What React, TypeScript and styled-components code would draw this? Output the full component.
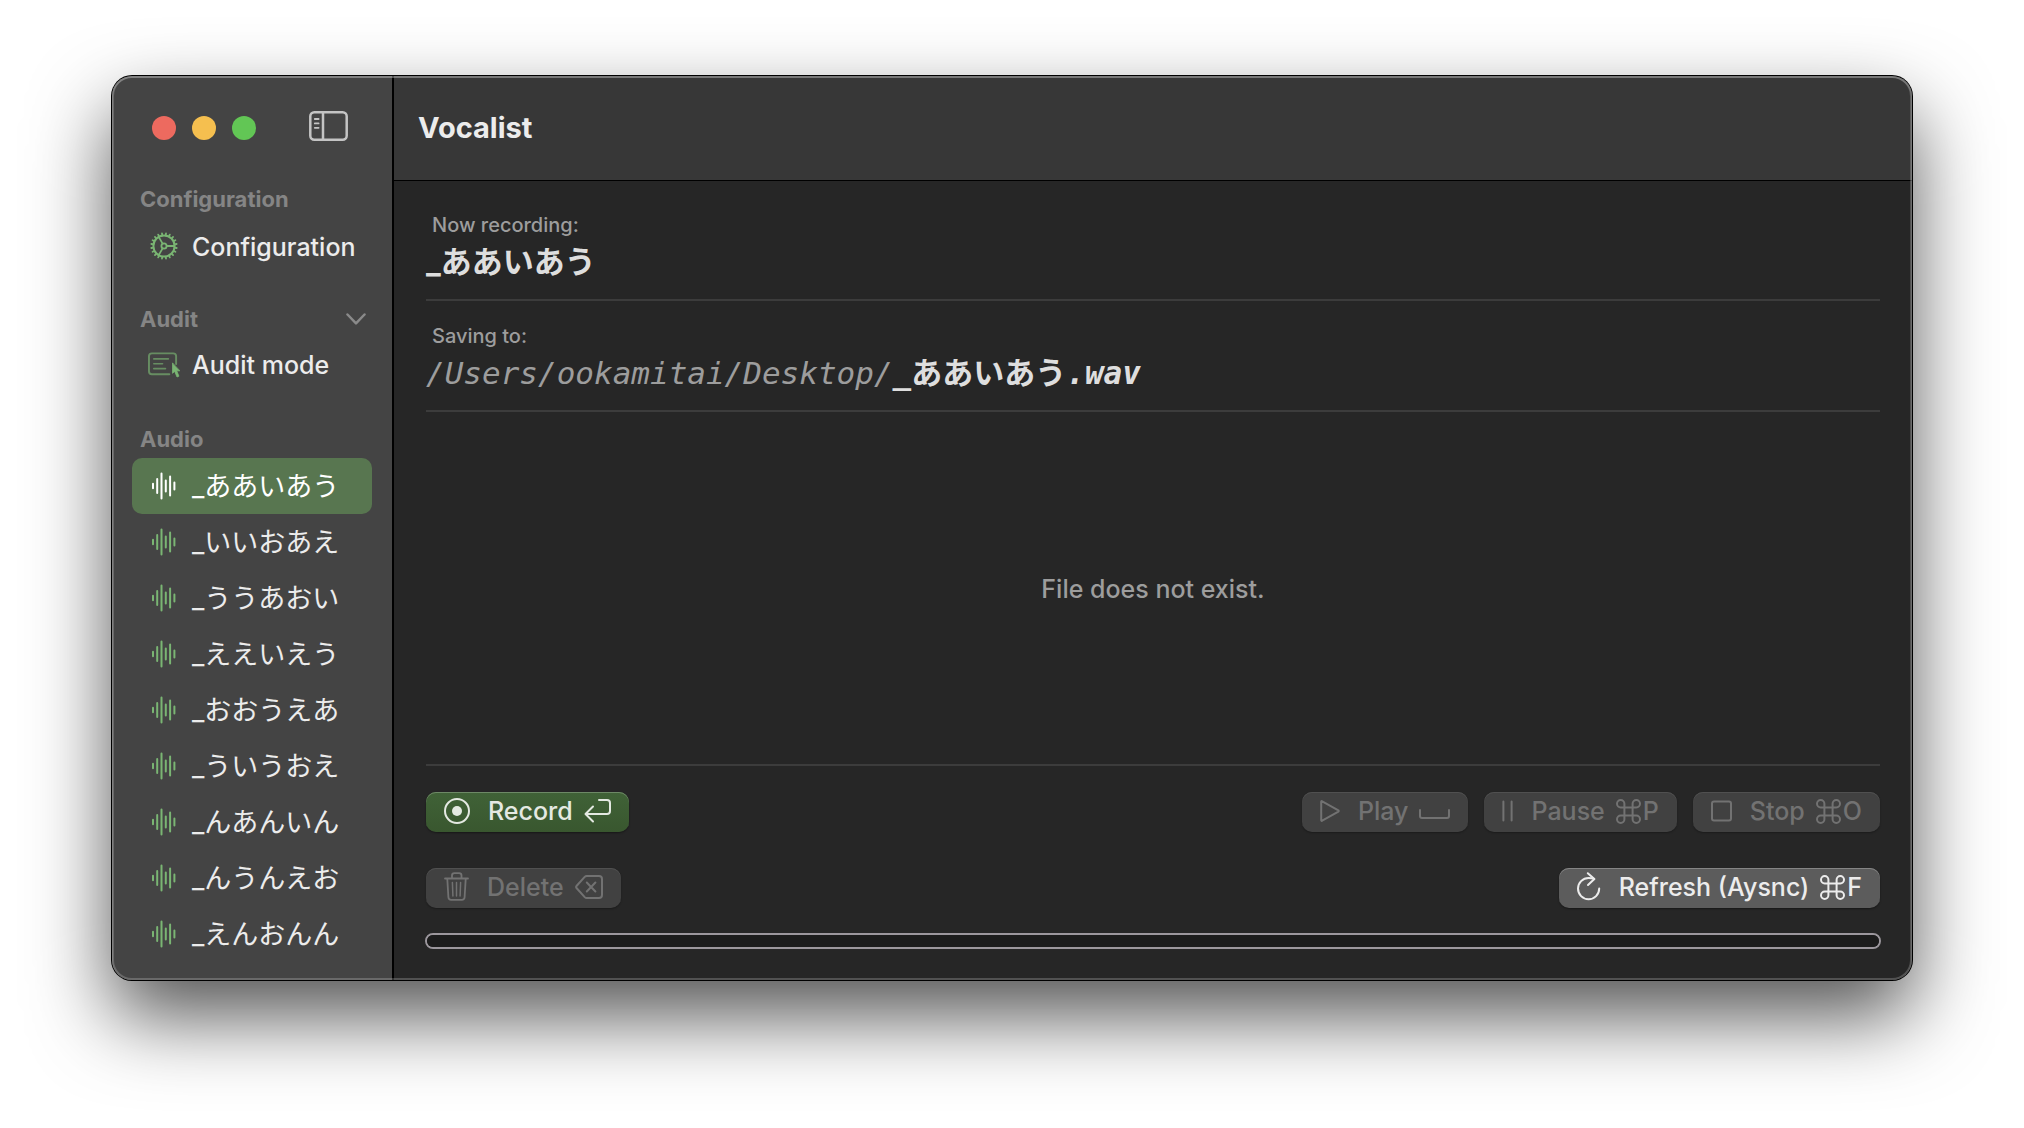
import React, { useState } from "react";
import styled, { createGlobalStyle, css } from "styled-components";

const sans = `Inter, "Noto Sans CJK JP", sans-serif`;
const mono = `"DejaVu Sans Mono", "Noto Sans CJK JP", monospace`;

const GlobalStyle = createGlobalStyle`
  *, *::before, *::after { box-sizing: border-box; }
  body {
    margin: 0;
    background: #ffffff;
    font-family: ${sans};
    -webkit-font-smoothing: antialiased;
  }
  button { font: inherit; border: 0; margin: 0; padding: 0; background: none; color: inherit; }
`;

const Desktop = styled.div`
  display: flex;
  min-height: 100vh;
  padding: 76px 112px 148px;
  overflow: hidden;
`;

const Window = styled.div`
  position: relative;
  display: flex;
  flex: 1;
  min-width: 0;
  border-radius: 20px;
  background: #262626;
  box-shadow: 0 0 0 1px #000000, 0 36px 80px rgba(0, 0, 0, 0.68);

  &::after {
    content: "";
    position: absolute;
    inset: 0;
    border-radius: 20px;
    box-shadow: inset 0 0 0 2px rgba(255, 255, 255, 0.2), inset 0 1px 0 1px rgba(255, 255, 255, 0.16);
    pointer-events: none;
  }
`;

const Sidebar = styled.aside`
  display: flex;
  flex-direction: column;
  flex: none;
  width: 282px;
  border-right: 2px solid #000000;
  border-radius: 20px 0 0 20px;
  background: #444444;
`;

const SidebarBar = styled.div`
  display: flex;
  align-items: center;
  justify-content: space-between;
  height: 104px;
  padding: 0 44px 0 40px;
`;

const Lights = styled.div`
  display: flex;
  gap: 16px;
`;

const Light = styled.button<{ $color: string }>`
  width: 24px;
  height: 24px;
  border-radius: 50%;
  background: ${(p) => p.$color};
`;

const IconButton = styled.button`
  display: flex;
  padding-bottom: 4px;
  color: #c4c4c4;
`;

const Nav = styled.nav`
  display: flex;
  flex-direction: column;
  gap: 26px;
  padding: 0 20px;
`;

const SectionHead = styled.div`
  display: flex;
  align-items: center;
  justify-content: space-between;
  height: 38px;
  padding: 0 6px 0 8px;
  color: #858585;
`;

const SectionTitle = styled.h2`
  margin: 0;
  font-size: 22px;
  line-height: 26px;
  font-weight: 700;
`;

const Disclosure = styled.button`
  display: flex;
  color: #8a8a8a;
`;

const Row = styled.button<{ $selected?: boolean; $compact?: boolean }>`
  display: flex;
  align-items: center;
  gap: 12px;
  width: 100%;
  height: ${(p) => (p.$compact ? "54px" : "56px")};
  margin-bottom: ${(p) => (p.$compact ? "2px" : "0")};
  padding: 0 16px;
  border-radius: 10px;
  font-size: 25px;
  line-height: 32px;
  font-weight: 500;
  text-align: left;
  white-space: nowrap;
  color: ${(p) => (p.$selected ? "#ffffff" : "#ececec")};
  background: ${(p) => (p.$selected ? "#587650" : "transparent")};
`;

const KanaRow = styled(Row)`
  font-size: 27px;
  font-weight: 400;
`;

const RowLabel = styled.span`
  padding-top: 2px;
`;

const IconSlot = styled.span<{ $selected?: boolean }>`
  display: flex;
  justify-content: center;
  flex: none;
  width: 32px;
  color: ${(p) => (p.$selected ? "#ffffff" : "#7ab573")};
`;

const Main = styled.main`
  display: flex;
  flex-direction: column;
  flex: 1;
  min-width: 0;
`;

const TitleBar = styled.header`
  display: flex;
  align-items: center;
  height: 105px;
  padding-left: 24px;
  border-bottom: 1px solid #000000;
  border-radius: 0 20px 0 0;
  background: #373737;
`;

const Title = styled.h1`
  margin: 0;
  font-size: 29px;
  line-height: 36px;
  font-weight: 700;
  color: #ececec;
`;

const Content = styled.div`
  display: flex;
  flex-direction: column;
  flex: 1;
  padding: 9px 32px 31px;
`;

const Field = styled.section`
  display: flex;
  flex-direction: column;
  gap: 5px;
  padding: 23px 0 17px;
  border-bottom: 2px solid #3c3c3c;
`;

const FieldLabel = styled.div`
  padding-left: 6px;
  font-size: 20px;
  line-height: 24px;
  font-weight: 500;
  color: #9d9d9d;
`;

const FieldValue = styled.div`
  font-size: 31px;
  line-height: 40px;
  font-weight: 700;
  color: #dedede;
`;

const PathValue = styled(FieldValue)`
  font-family: ${mono};
  font-weight: 400;
  font-style: italic;
  white-space: nowrap;
  color: #9d9d9d;
`;

const FileName = styled.strong`
  font-weight: 700;
  color: #dedede;
`;

const Upright = styled.span`
  font-style: normal;
`;

const Empty = styled.div`
  display: flex;
  align-items: center;
  justify-content: center;
  flex: 1;
  padding-top: 2px;
  border-bottom: 2px solid #3c3c3c;
  font-size: 25px;
  line-height: 32px;
  font-weight: 500;
  color: #9d9d9d;
`;

const Controls = styled.div`
  display: flex;
  flex-direction: column;
  gap: 36px;
  padding: 26px 0 25px;
`;

const ControlRow = styled.div`
  display: flex;
  justify-content: space-between;
`;

const Group = styled.div`
  display: flex;
  gap: 16px;
`;

const tones = {
  primary: css`
    color: #e4e9e2;
    background: linear-gradient(#406237, #39572f);
    box-shadow: inset 0 1px 0 #6d8966, 0 1px 2px rgba(0, 0, 0, 0.4);
  `,
  normal: css`
    color: #ececec;
    background: #5c5c5c;
    box-shadow: inset 0 1px 0 #858585, 0 1px 2px rgba(0, 0, 0, 0.4);
  `,
  disabled: css`
    color: #727272;
    background: #414141;
    box-shadow: inset 0 1px 0 #505050, 0 1px 2px rgba(0, 0, 0, 0.3);
  `,
};

const Push = styled.button<{ $tone: keyof typeof tones }>`
  display: flex;
  align-items: center;
  height: 40px;
  padding: 0 18px 2px;
  gap: 18px;
  border-radius: 10px;
  font-size: 25px;
  line-height: 32px;
  font-weight: 500;
  white-space: nowrap;
  ${(p) => tones[p.$tone]}
`;

const PushText = styled.span`
  display: flex;
  align-items: center;
  gap: 11px;
`;

const Keys = styled.span`
  display: flex;
  align-items: center;
  gap: 2px;
`;

const Meter = styled.progress`
  display: block;
  appearance: none;
  width: auto;
  height: 16px;
  margin: 0 -1px;
  border: 2px solid #9c979d;
  border-radius: 8px;
  background: #1c1c1c;
  overflow: hidden;

  &::-webkit-progress-bar { background: #1c1c1c; }
  &::-webkit-progress-value { background: #587650; }
`;

type IconProps = { w: number; h: number; s?: number; children: React.ReactNode };

const Icon = ({ w, h, s = 2, children }: IconProps) => (
  <svg
    width={w}
    height={h}
    viewBox={`0 0 ${w} ${h}`}
    fill="none"
    stroke="currentColor"
    strokeWidth={s}
    strokeLinecap="round"
    strokeLinejoin="round"
    aria-hidden="true"
  >
    {children}
  </svg>
);

const SidebarIcon = () => (
  <Icon w={39} h={30} s={2.5}>
    <rect x="1.3" y="1.3" width="36.4" height="27.4" rx="4" />
    <path d="M14 1.5v27" />
    <path d="M5.8 8h3.8M5.8 12.4h3.8M5.8 16.8h3.8" strokeWidth="1.8" />
  </Icon>
);

const GearIcon = () => {
  const teeth = Array.from({ length: 20 }, (_, i) => i * 18);
  return (
    <Icon w={28} h={28}>
      <circle cx="14" cy="14" r="10.6" />
      <circle cx="14" cy="14" r="2.6" strokeWidth="1.8" />
      <path d="M16.8 14h7.6M12.6 11.6L8.7 4.9M12.6 16.4l-3.9 6.7" strokeWidth="1.8" />
      {teeth.map((a) => (
        <path key={a} d="M14 2.4V1.2" strokeWidth="1.8" transform={`rotate(${a + 9} 14 14)`} />
      ))}
    </Icon>
  );
};

const AuditIcon = () => (
  <Icon w={33} h={26}>
    <g opacity="0.65">
      <path d="M22 22.5H4a3 3 0 0 1-3-3V4a3 3 0 0 1 3-3h22a3 3 0 0 1 3 3v8" />
      <path d="M6 6.7h15M6 11.7h9M6 16.8h12" strokeWidth="1.7" />
    </g>
    <path
      d="M25.3 11.2v10.4l2.2-2 2.4 5.8 2-0.9-2.3-5.5h2.9z"
      fill="currentColor"
      strokeWidth="0.8"
    />
  </Icon>
);

const WaveIcon = () => (
  <Icon w={24} h={28}>
    <path d="M1 11.8v4.4M5.2 7v14M9.5 1.5v25M13.8 8.5v11M18.1 4.5v19M22.4 10.5v7" />
  </Icon>
);

const ChevronIcon = () => (
  <Icon w={20} h={12} s={2.5}>
    <path d="M1.5 1.5L10 10.3l8.5-8.8" />
  </Icon>
);

const RecordIcon = () => (
  <Icon w={26} h={26}>
    <circle cx="13" cy="13" r="12" />
    <circle cx="13" cy="13" r="5" fill="currentColor" stroke="none" />
  </Icon>
);

const ReturnIcon = () => (
  <Icon w={27} h={27}>
    <path d="M15 2h8a3 3 0 0 1 3 3v8a3 3 0 0 1-3 3H1.6M9 8.5L1.5 16L9 23.5" />
  </Icon>
);

const TrashIcon = () => (
  <Icon w={25} h={32} s={1.8}>
    <path d="M1 7.5h23M8 7V4.5a2.4 2.4 0 0 1 2.4-2.4h4.7a2.4 2.4 0 0 1 2.4 2.4V7" />
    <path d="M3.3 8l1.1 18.2a2.8 2.8 0 0 0 2.8 2.6h10.6a2.8 2.8 0 0 0 2.8-2.6L21.7 8" />
    <path d="M8.4 11.5l.5 13.5M12.5 11.5V25M16.6 11.5L16.1 25" strokeWidth="1.5" />
  </Icon>
);

const EraseIcon = () => (
  <Icon w={28} h={24}>
    <path d="M11.8 1H24a3 3 0 0 1 3 3v16a3 3 0 0 1-3 3H11.8a3 3 0 0 1-2.1-.9L1.5 13a1.4 1.4 0 0 1 0-2l8.2-9.1a3 3 0 0 1 2.1-.9z" />
    <path d="M11.8 7.5l8.6 9M20.4 7.5l-8.6 9" />
  </Icon>
);

const PlayIcon = () => (
  <Icon w={20} h={22}>
    <path d="M1.2 1.8v18.4a.6.6 0 0 0 1 .5L18.4 11.6a.7.7 0 0 0 0-1.2L2.2 1.3a.6.6 0 0 0-1 .5z" />
  </Icon>
);

const SpaceIcon = () => (
  <Icon w={31} h={16}>
    <path d="M1 7v6a2 2 0 0 0 2 2h25a2 2 0 0 0 2-2V7" />
  </Icon>
);

const PauseIcon = () => (
  <Icon w={11} h={22}>
    <path d="M1.4 1.5v19M9.6 1.5v19" />
  </Icon>
);

const StopIcon = () => (
  <Icon w={21} h={22}>
    <rect x="1" y="1.5" width="19" height="19" rx="2" />
  </Icon>
);

const RefreshIcon = () => (
  <Icon w={24} h={32}>
    <path d="M22.2 17.6A10.6 10.6 0 1 1 11.6 7c2 0 3.8.3 5.4.9" />
    <path d="M10.8 2.2l6.6 5.8-6.4 6" />
  </Icon>
);

const CommandIcon = () => (
  <Icon w={25} h={25}>
    <path d="M8.4 8.4V4.7A3.7 3.7 0 1 0 4.7 8.4h15.6a3.7 3.7 0 1 0-3.7-3.7v15.6a3.7 3.7 0 1 0 3.7-3.7H4.7a3.7 3.7 0 1 0 3.7 3.7z" />
  </Icon>
);

const clips = [
  "_ああいあう",
  "_いいおあえ",
  "_ううあおい",
  "_ええいえう",
  "_おおうえあ",
  "_ういうおえ",
  "_んあんいん",
  "_んうんえお",
  "_えんおんん",
];

export default function App() {
  const [current, setCurrent] = useState(clips[0]);
  const [auditOpen, setAuditOpen] = useState(true);

  return (
    <>
      <GlobalStyle />
      <Desktop>
        <Window>
          <Sidebar>
            <SidebarBar>
              <Lights>
                <Light $color="#ed6a5f" aria-label="Close" />
                <Light $color="#f5bf4f" aria-label="Minimize" />
                <Light $color="#62c655" aria-label="Zoom" />
              </Lights>
              <IconButton aria-label="Toggle sidebar">
                <SidebarIcon />
              </IconButton>
            </SidebarBar>
            <Nav>
              <section>
                <SectionHead>
                  <SectionTitle>Configuration</SectionTitle>
                </SectionHead>
                <Row>
                  <IconSlot><GearIcon /></IconSlot>
                  <RowLabel>Configuration</RowLabel>
                </Row>
              </section>
              <section>
                <SectionHead>
                  <SectionTitle>Audit</SectionTitle>
                  <Disclosure
                    aria-label="Show or hide Audit"
                    aria-expanded={auditOpen}
                    onClick={() => setAuditOpen(!auditOpen)}
                  >
                    <ChevronIcon />
                  </Disclosure>
                </SectionHead>
                {auditOpen && (
                  <Row $compact>
                    <IconSlot><AuditIcon /></IconSlot>
                    <span>Audit mode</span>
                  </Row>
                )}
              </section>
              <section>
                <SectionHead>
                  <SectionTitle>Audio</SectionTitle>
                </SectionHead>
                {clips.map((clip) => (
                  <KanaRow
                    key={clip}
                    lang="ja"
                    $selected={clip === current}
                    onClick={() => setCurrent(clip)}
                  >
                    <IconSlot $selected={clip === current}><WaveIcon /></IconSlot>
                    <RowLabel>{clip}</RowLabel>
                  </KanaRow>
                ))}
              </section>
            </Nav>
          </Sidebar>
          <Main>
            <TitleBar>
              <Title>Vocalist</Title>
            </TitleBar>
            <Content>
              <Field>
                <FieldLabel>Now recording:</FieldLabel>
                <FieldValue lang="ja">{current}</FieldValue>
              </Field>
              <Field>
                <FieldLabel>Saving to:</FieldLabel>
                <PathValue>
                  /Users/ookamitai/Desktop/
                  <FileName>
                    <Upright lang="ja">{current}</Upright>.wav
                  </FileName>
                </PathValue>
              </Field>
              <Empty>File does not exist.</Empty>
              <Controls>
                <ControlRow>
                  <Push $tone="primary">
                    <RecordIcon />
                    <PushText>Record <ReturnIcon /></PushText>
                  </Push>
                  <Group>
                    <Push $tone="disabled" disabled>
                      <PlayIcon />
                      <PushText>Play <SpaceIcon /></PushText>
                    </Push>
                    <Push $tone="disabled" disabled>
                      <PauseIcon />
                      <PushText>Pause <Keys><CommandIcon />P</Keys></PushText>
                    </Push>
                    <Push $tone="disabled" disabled>
                      <StopIcon />
                      <PushText>Stop <Keys><CommandIcon />O</Keys></PushText>
                    </Push>
                  </Group>
                </ControlRow>
                <ControlRow>
                  <Push $tone="disabled" disabled>
                    <TrashIcon />
                    <PushText>Delete <EraseIcon /></PushText>
                  </Push>
                  <Push $tone="normal">
                    <RefreshIcon />
                    <PushText>Refresh (Aysnc) <Keys><CommandIcon />F</Keys></PushText>
                  </Push>
                </ControlRow>
              </Controls>
              <Meter value={0} max={1} aria-label="Progress" />
            </Content>
          </Main>
        </Window>
      </Desktop>
    </>
  );
}
